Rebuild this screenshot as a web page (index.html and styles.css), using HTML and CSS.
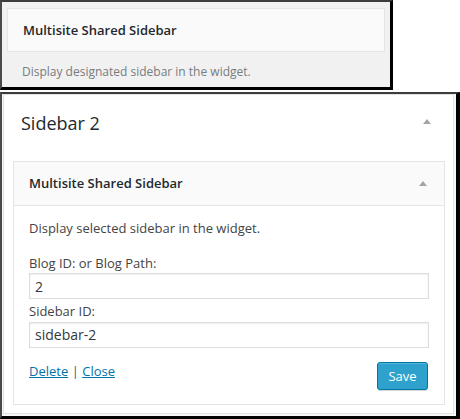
FILE: index.html
```html
<!DOCTYPE html>
<html>
<head>
<meta charset="utf-8">
<link rel="stylesheet" href="styles.css">
</head>
<body>
<div class="page">
  <div class="preview">
    <div class="preview-title"><h3>Multisite Shared Sidebar</h3></div>
    <p class="preview-desc">Display designated sidebar in the widget.</p>
  </div>
  <div class="frame">
    <div class="panel">
      <div class="sidebar-head">
        <h2>Sidebar 2</h2>
        <span class="arrow"></span>
      </div>
      <div class="widget">
        <div class="widget-top">
          <h3>Multisite Shared Sidebar</h3>
          <span class="arrow"></span>
        </div>
        <div class="widget-inside">
          <p class="desc">Display selected sidebar in the widget.</p>
          <label class="field-label">Blog ID: or Blog Path:</label>
          <input class="field" type="text" value="2">
          <label class="field-label second">Sidebar ID:</label>
          <input class="field" type="text" value="sidebar-2">
          <div class="controls">
            <div class="links"><a href="#">Delete</a> <span class="sep">|</span> <a href="#">Close</a></div>
            <button class="save">Save</button>
          </div>
        </div>
      </div>
    </div>
  </div>
</div>
</body>
</html>
```

FILE: styles.css
```css
* { box-sizing: border-box; }
html, body {
  margin: 0;
  padding: 0;
  background: #ffffff;
}
body {
  font-family: "Open Sans", "Noto Sans", sans-serif;
  font-size: 13px;
  color: #444444;
  width: 460px;
  height: 419px;
  overflow: hidden;
}
.page {
  display: flex;
  flex-direction: column;
}
.preview {
  width: 393px;
  height: 90px;
  background: #f1f1f1;
  border-top: 2px solid #3c3c3c;
  border-left: 2px solid #4a4a4a;
  border-right: 3px solid #000;
  border-bottom: 3px solid #000;
  padding: 6px 5px 0 5px;
}
.preview-title {
  height: 44px;
  background: #fafafa;
  border: 1px solid #e5e5e5;
  display: flex;
  align-items: center;
  padding: 0 15px;
}
.preview-title h3,
.widget-top h3 {
  margin: 0;
  font-size: 13px;
  font-weight: 600;
  color: #23282d;
  line-height: 1.4;
}
.preview-desc {
  margin: 11px 0 0 15px;
  font-size: 12px;
  line-height: 18px;
  color: #777c80;
}
.frame {
  margin-top: 2px;
  width: 460px;
  height: 327px;
  border-top: 2px solid #3c3c3c;
  border-left: 2px solid #4a4a4a;
  border-right: 4px solid #000;
  border-bottom: 3px solid #000;
  padding: 0 2px 2px 1px;
  background: #f7f7f7;
}
.panel {
  height: 100%;
  background: #fff;
  border: 1px solid #e2e2e2;
  display: flex;
  flex-direction: column;
}
.sidebar-head {
  height: 66px;
  display: flex;
  align-items: flex-start;
  justify-content: space-between;
  padding: 14px 22px 0 17px;
}
.sidebar-head h2 {
  margin: 0;
  font-size: 18px;
  font-weight: 400;
  line-height: 28px;
  color: #23282d;
}
.arrow {
  width: 0;
  height: 0;
  border-left: 4px solid transparent;
  border-right: 4px solid transparent;
  border-bottom: 5px solid #a0a5aa;
}
.sidebar-head .arrow {
  margin-top: 10px;
}
.widget {
  margin: 0 8px 0 9px;
  border: 1px solid #e5e5e5;
  background: #fff;
}
.widget-top {
  height: 44px;
  background: #fafafa;
  border-bottom: 1px solid #e5e5e5;
  display: flex;
  align-items: center;
  justify-content: space-between;
  padding: 0 17px 0 15px;
}
.widget-inside {
  padding: 0 15px 14px 15px;
}
.desc {
  margin: 13px 0 15px 0;
  line-height: 19.5px;
}
.field-label {
  display: block;
  line-height: 19.5px;
}
.field-label.second {
  margin-top: 3px;
}
.field {
  display: block;
  width: 400px;
  height: 26px;
  margin: 0;
  border: 1px solid #ddd;
  box-shadow: inset 0 1px 2px rgba(0,0,0,0.07);
  padding: 0 5px;
  font-family: "Open Sans", "Noto Sans", sans-serif;
  font-size: 14px;
  color: #32373c;
  background: #fff;
  outline: none;
}
.controls {
  margin-top: 14px;
  display: flex;
  justify-content: space-between;
  align-items: flex-start;
}
.links {
  line-height: 19px;
  color: #444;
}
.links a {
  color: #0073aa;
  text-decoration: underline;
}
.sep {
  color: #555;
}
.save {
  width: 51px;
  height: 28px;
  background: #2ea2cc;
  border: 1px solid #0074a2;
  border-radius: 3px;
  box-shadow: inset 0 1px 0 rgba(120,200,230,0.5), 0 1px 0 rgba(0,0,0,0.15);
  color: #fff;
  font-family: "Open Sans", "Noto Sans", sans-serif;
  font-size: 13px;
  padding: 0;
  margin-right: 1px;
}
```
